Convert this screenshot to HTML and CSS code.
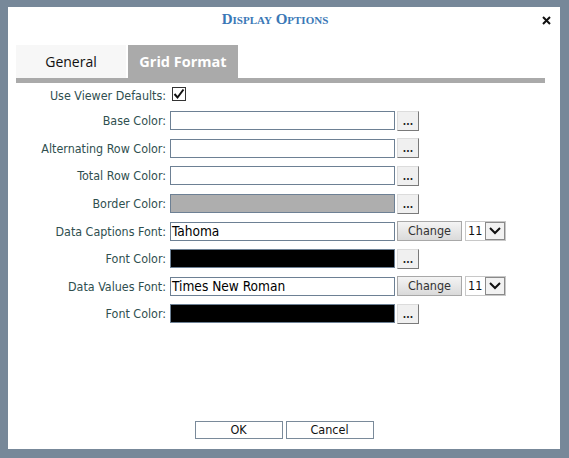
FILE: index.html
```html
<!DOCTYPE html>
<html lang="en">
<head>
  <meta charset="UTF-8" />
  <title>Display Options</title>
  <link rel="stylesheet" href="styles.css">
</head>
<body>
  <div class="dialog">
    <div class="dialog-header">
      <div class="dialog-title">Display Options</div>
      <div class="close-btn">
        <svg width="9" height="9" viewBox="0 0 9 9"><path d="M1 1 L8 8 M8 1 L1 8" stroke="#111" stroke-width="2" /></svg>
      </div>
    </div>

    <div class="tabs">
      <div class="tab">General</div>
      <div class="tab active">Grid Format</div>
    </div>
    <div class="tab-bar"></div>

    <div class="form">
      <div class="row first">
        <div class="label">Use Viewer Defaults:</div>
        <span class="check">
          <svg width="12" height="12" viewBox="0 0 12 12"><path d="M1.5 6 L4.5 9.5 L10.5 1.5" fill="none" stroke="#111" stroke-width="2" /></svg>
        </span>
      </div>
      <div class="row">
        <div class="label">Base Color:</div>
        <div class="field"></div>
        <div class="dots-btn">...</div>
      </div>
      <div class="row">
        <div class="label">Alternating Row Color:</div>
        <div class="field"></div>
        <div class="dots-btn">...</div>
      </div>
      <div class="row">
        <div class="label">Total Row Color:</div>
        <div class="field"></div>
        <div class="dots-btn">...</div>
      </div>
      <div class="row">
        <div class="label">Border Color:</div>
        <div class="field gray"></div>
        <div class="dots-btn">...</div>
      </div>
      <div class="row">
        <div class="label">Data Captions Font:</div>
        <div class="field">Tahoma</div>
        <div class="change-btn">Change</div>
        <div class="size-select"><span>11</span><span class="arrow"><svg width="12" height="8" viewBox="0 0 12 8"><path d="M1 1 L6 6 L11 1" fill="none" stroke="#111" stroke-width="2" /></svg></span></div>
      </div>
      <div class="row">
        <div class="label">Font Color:</div>
        <div class="field black"></div>
        <div class="dots-btn">...</div>
      </div>
      <div class="row">
        <div class="label">Data Values Font:</div>
        <div class="field">Times New Roman</div>
        <div class="change-btn">Change</div>
        <div class="size-select"><span>11</span><span class="arrow"><svg width="12" height="8" viewBox="0 0 12 8"><path d="M1 1 L6 6 L11 1" fill="none" stroke="#111" stroke-width="2" /></svg></span></div>
      </div>
      <div class="row">
        <div class="label">Font Color:</div>
        <div class="field black"></div>
        <div class="dots-btn">...</div>
      </div>
    </div>

    <div class="footer">
      <div class="footer-btn">OK</div>
      <div class="footer-btn">Cancel</div>
    </div>
  </div>
</body>
</html>
```

FILE: styles.css
```css
body {
  margin: 0;
  background-color: #778899;
  font-family: "DejaVu Sans Condensed", "DejaVu Sans", sans-serif;
  font-stretch: condensed;
}
.dialog {
  margin: 7px 9px 9px 8px;
  height: 442px;
  background: #fff;
  display: flex;
  flex-direction: column;
}
.dialog-header {
  height: 38px;
  display: flex;
  align-items: flex-start;
  padding-right: 9px;
}
.dialog-title {
  flex: 1;
  text-align: center;
  font-family: "Liberation Serif", serif;
  font-variant: small-caps;
  font-weight: bold;
  font-size: 15px;
  line-height: 20px;
  padding-top: 2px;
  color: #3a78b6;
}
.close-btn {
  margin-top: 9px;
  width: 9px;
  height: 9px;
  display: flex;
}
.tabs {
  display: flex;
  gap: 2px;
  margin-left: 8px;
}
.tab {
  width: 110px;
  height: 33px;
  line-height: 33px;
  text-align: center;
  background: #f7f7f7;
  color: #111;
  font-family: "Open Sans", sans-serif;
  font-stretch: normal;
  font-size: 14px;
}
.tab.active {
  background: #aaaaaa;
  color: #fff;
  font-weight: bold;
  font-size: 14.5px;
}
.tab-bar {
  margin-left: 8px;
  width: 529px;
  height: 5px;
  background: #aaaaaa;
}
.row {
  display: flex;
  align-items: center;
  height: 27.6px;
}
.row.first {
  height: 24px;
}
.label {
  width: 158px;
  margin-right: 4px;
  text-align: right;
  font-size: 12.4px;
  color: #2f4f4f;
}
.check {
  width: 14px;
  height: 14px;
  box-sizing: border-box;
  border: 1px solid #333;
  display: flex;
  align-items: center;
  justify-content: center;
  margin-top: -3px;
  margin-left: 2px;
}
.field {
  width: 225px;
  height: 19px;
  box-sizing: border-box;
  border: 1px solid #6d8094;
  padding-left: 1px;
  font-size: 13.6px;
  line-height: 17px;
  color: #000;
  background: #fff;
}
.field.gray {
  background: #aeaeae;
}
.field.black {
  background: #000;
}
.dots-btn {
  margin-left: 2px;
  width: 22px;
  height: 20px;
  box-sizing: border-box;
  border: 1px solid;
  border-color: #dcdcdc #7a7a7a #7a7a7a #dcdcdc;
  background: #f0f0f0;
  font-size: 10px;
  font-weight: bold;
  text-align: center;
  line-height: 20px;
  color: #222;
}
.change-btn {
  margin-left: 2px;
  width: 65px;
  height: 20px;
  box-sizing: border-box;
  border: 1px solid #a8a8a8;
  background: linear-gradient(#f4f4f4, #dadada);
  font-size: 12.5px;
  line-height: 18px;
  text-align: center;
  color: #333;
}
.size-select {
  margin-left: 3px;
  width: 41px;
  height: 20px;
  box-sizing: border-box;
  border: 1px solid #c8c8c8;
  display: flex;
  font-size: 12.5px;
  line-height: 18px;
  color: #111;
}
.size-select span:first-child {
  flex: 1;
  padding-left: 2px;
}
.size-select .arrow {
  width: 20px;
  box-sizing: border-box;
  border: 1px solid #8a8a8a;
  background: #f2f2f2;
  display: flex;
  align-items: center;
  justify-content: center;
}
.footer {
  margin-top: auto;
  padding-bottom: 10px;
  display: flex;
  justify-content: center;
  gap: 3px;
}
.footer-btn {
  width: 88px;
  height: 18px;
  box-sizing: border-box;
  border: 1px solid #7a8a9a;
  text-align: center;
  font-size: 12.5px;
  line-height: 16px;
  color: #111;
  background: #fff;
}
```
